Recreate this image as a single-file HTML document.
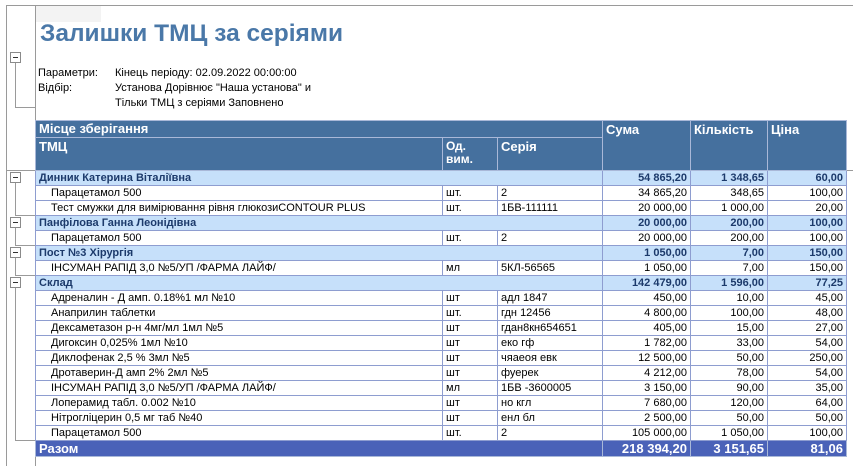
<!DOCTYPE html>
<html><head><meta charset="utf-8"><style>
*{margin:0;padding:0;box-sizing:border-box}
body{width:853px;height:466px;background:#fff;position:relative;overflow:hidden;font-family:"Liberation Sans",Arial,sans-serif;font-size:11px;color:#000}
.a{position:absolute}
.v{position:absolute;width:1px;background:#9a9a9a}
.h{position:absolute;height:1px;background:#9a9a9a}
.box{position:absolute;width:11px;height:11px;border:1px solid #8a8a8a;background:#fff}
.box:after{content:"";position:absolute;left:2px;right:2px;top:4px;height:1px;background:#333}
table{position:absolute;left:35px;top:120px;border-collapse:collapse;table-layout:fixed;width:811px}
td{height:15px;border:1px solid #8e9dd0;padding:0 3px;white-space:nowrap;overflow:hidden;line-height:13px}
.hd td{background:#45709e;color:#fff;font-weight:bold;font-size:13px;border-color:#a9b8d8;vertical-align:top;padding-top:2px}
.g td{background:#c6e0fa;font-weight:bold;color:#1c3a6b}
.r{text-align:right}
.i{padding-left:15px}
.t td{background:#4a62b8;color:#fff;font-weight:bold;font-size:13px;height:16px;border-color:#a9b8d8}
</style></head><body>
<div class="h" style="left:6px;top:5px;width:847px"></div>
<div class="v" style="left:6px;top:5px;height:461px"></div>
<div class="v" style="left:35px;top:5px;height:461px"></div>
<div class="a" style="left:36px;top:6px;width:65px;height:16px;background:#f3f3f3"></div>
<div class="a" style="left:40px;top:20px;font-size:24.5px;font-weight:bold;color:#4a78a8">Залишки ТМЦ за серіями</div>
<div class="a" style="left:38px;top:66px;line-height:15px">Параметри:<br>Відбір:</div>
<div class="a" style="left:115px;top:66px;line-height:15px">Кінець періоду: 02.09.2022 00:00:00<br>Установа Дорівнює "Наша установа" и<br>Тільки ТМЦ з серіями Заповнено</div>
<div class="box" style="left:10px;top:52px"></div>
<div class="v" style="left:15px;top:63px;height:44px"></div>
<div class="h" style="left:15px;top:107px;width:20px"></div>
<div class="h" style="left:6px;top:170px;width:847px"></div>
<div class="box" style="left:10px;top:172px"></div>
<div class="v" style="left:15px;top:183px;height:32px"></div>
<div class="h" style="left:15px;top:215px;width:20px"></div>
<div class="box" style="left:10px;top:217px"></div>
<div class="v" style="left:15px;top:228px;height:17px"></div>
<div class="h" style="left:15px;top:245px;width:20px"></div>
<div class="box" style="left:10px;top:247px"></div>
<div class="v" style="left:15px;top:258px;height:17px"></div>
<div class="h" style="left:15px;top:275px;width:20px"></div>
<div class="box" style="left:10px;top:277px"></div>
<div class="v" style="left:15px;top:288px;height:152px"></div>
<div class="h" style="left:15px;top:440px;width:20px"></div>
<table>
<colgroup><col style="width:407px"><col style="width:55px"><col style="width:105px"><col style="width:88px"><col style="width:77px"><col style="width:79px"></colgroup>
<tr class="hd"><td colspan="3" style="height:17px;padding-top:1px">Місце зберігання</td><td rowspan="2">Сума</td><td rowspan="2">Кількість</td><td rowspan="2">Ціна</td></tr>
<tr class="hd"><td style="height:33px">ТМЦ</td><td style="font-size:12px">Од.<br>вим.</td><td>Серія</td></tr>
<tr class="g"><td colspan="3">Динник Катерина Віталіївна</td><td class="r">54 865,20</td><td class="r">1 348,65</td><td class="r">60,00</td></tr>
<tr><td class="i">Парацетамол 500</td><td>шт.</td><td>2</td><td class="r">34 865,20</td><td class="r">348,65</td><td class="r">100,00</td></tr>
<tr><td class="i">Тест смужки для вимірювання рівня глюкозиCONTOUR PLUS</td><td>шт.</td><td>1БВ-111111</td><td class="r">20 000,00</td><td class="r">1 000,00</td><td class="r">20,00</td></tr>
<tr class="g"><td colspan="3">Панфілова Ганна Леонідівна</td><td class="r">20 000,00</td><td class="r">200,00</td><td class="r">100,00</td></tr>
<tr><td class="i">Парацетамол 500</td><td>шт.</td><td>2</td><td class="r">20 000,00</td><td class="r">200,00</td><td class="r">100,00</td></tr>
<tr class="g"><td colspan="3">Пост №3 Хірургія</td><td class="r">1 050,00</td><td class="r">7,00</td><td class="r">150,00</td></tr>
<tr><td class="i">ІНСУМАН РАПІД 3,0 №5/УП /ФАРМА ЛАЙФ/</td><td>мл</td><td>5КЛ-56565</td><td class="r">1 050,00</td><td class="r">7,00</td><td class="r">150,00</td></tr>
<tr class="g"><td colspan="3">Склад</td><td class="r">142 479,00</td><td class="r">1 596,00</td><td class="r">77,25</td></tr>
<tr><td class="i">Адреналин - Д амп. 0.18%1 мл №10</td><td>шт</td><td>адл 1847</td><td class="r">450,00</td><td class="r">10,00</td><td class="r">45,00</td></tr>
<tr><td class="i">Анаприлин таблетки</td><td>шт.</td><td>гдн 12456</td><td class="r">4 800,00</td><td class="r">100,00</td><td class="r">48,00</td></tr>
<tr><td class="i">Дексаметазон р-н 4мг/мл 1мл №5</td><td>шт</td><td>гдан8кн654651</td><td class="r">405,00</td><td class="r">15,00</td><td class="r">27,00</td></tr>
<tr><td class="i">Дигоксин 0,025% 1мл №10</td><td>шт</td><td>еко гф</td><td class="r">1 782,00</td><td class="r">33,00</td><td class="r">54,00</td></tr>
<tr><td class="i">Диклофенак 2,5 % 3мл №5</td><td>шт</td><td>чяаеоя евк</td><td class="r">12 500,00</td><td class="r">50,00</td><td class="r">250,00</td></tr>
<tr><td class="i">Дротаверин-Д амп 2% 2мл №5</td><td>шт</td><td>фуерек</td><td class="r">4 212,00</td><td class="r">78,00</td><td class="r">54,00</td></tr>
<tr><td class="i">ІНСУМАН РАПІД 3,0 №5/УП /ФАРМА ЛАЙФ/</td><td>мл</td><td>1БВ -3600005</td><td class="r">3 150,00</td><td class="r">90,00</td><td class="r">35,00</td></tr>
<tr><td class="i">Лоперамид табл. 0.002 №10</td><td>шт</td><td>но кгл</td><td class="r">7 680,00</td><td class="r">120,00</td><td class="r">64,00</td></tr>
<tr><td class="i">Нітрогліцерин 0,5 мг таб №40</td><td>шт</td><td>енл бл</td><td class="r">2 500,00</td><td class="r">50,00</td><td class="r">50,00</td></tr>
<tr><td class="i">Парацетамол 500</td><td>шт.</td><td>2</td><td class="r">105 000,00</td><td class="r">1 050,00</td><td class="r">100,00</td></tr>
<tr class="t"><td colspan="3">Разом</td><td class="r">218 394,20</td><td class="r">3 151,65</td><td class="r">81,06</td></tr>
</table>
</body></html>
